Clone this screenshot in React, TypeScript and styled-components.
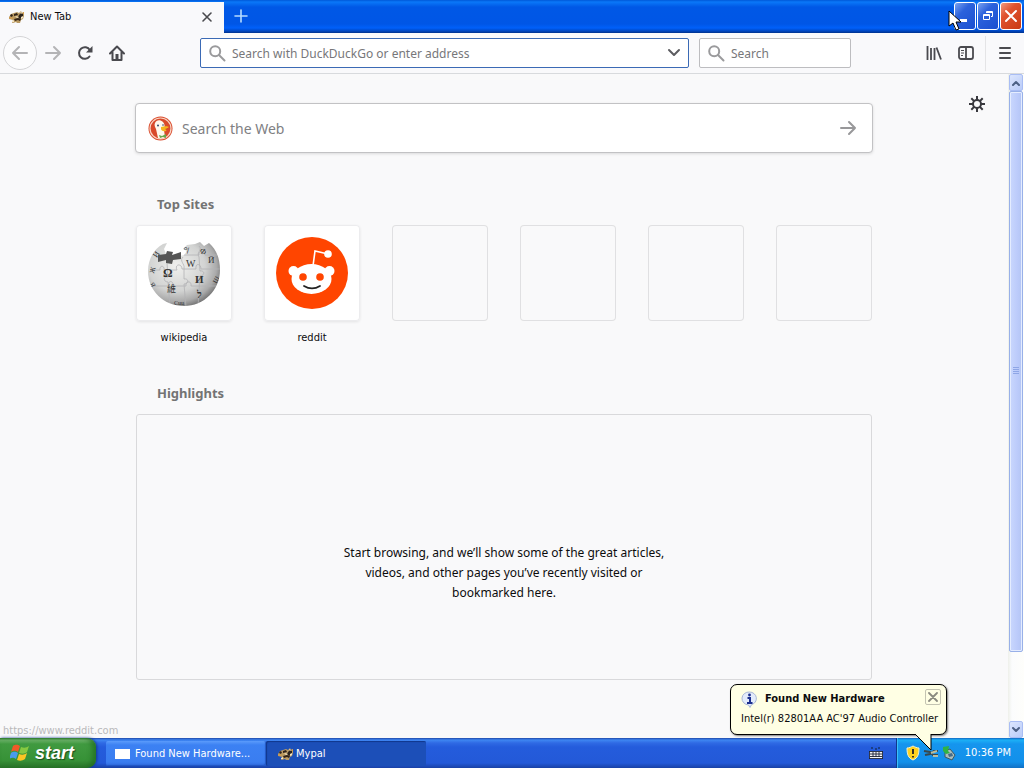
import React from "react";
import styled, { createGlobalStyle, css } from "styled-components";

const tahoma = `"DejaVu Sans Condensed", "DejaVu Sans", Tahoma, sans-serif`;
const segoe = `"Noto Sans", "Segoe UI", sans-serif`;

const GlobalStyle = createGlobalStyle`
  * { box-sizing: border-box; }
  body { margin: 0; background: #f9f9fa; color: #0c0c0d; font-family: ${segoe}; font-size: 12px; }
  button, input { font: inherit; color: inherit; }
  button { padding: 0; border: 0; background: none; }
  svg { display: block; flex: none; }
  h2, p, ul { margin: 0; padding: 0; }
`;

const Desktop = styled.div`
  position: relative;
  display: flex;
  flex-direction: column;
  height: 100vh;
  overflow: hidden;
`;

const TabStrip = styled.header`
  display: flex;
  flex: none;
  height: 33px;
  background: linear-gradient(#0058d8 0, #0a78f8 2px, #0058e6 7px, #0056e6 24px, #0060fa 28px, #0046c0 31px, #00318c 33px);
`;

const Tab = styled.div`
  display: flex;
  align-items: center;
  width: 224px;
  margin-top: 2px;
  padding: 0 8px 2px;
  gap: 4px;
  background: #f9f9fb;
  font: 11px/16px ${tahoma};
`;

const TabTitle = styled.span`
  flex: 1;
`;

const TabButton = styled.button`
  display: grid;
  place-items: center;
  width: 18px;
  height: 24px;
`;

const NewTab = styled.button`
  display: grid;
  place-items: center;
  width: 34px;
  padding-bottom: 2px;
`;

const WindowButtons = styled.div`
  display: flex;
  gap: 1px;
  margin: 2px 2px 3px auto;
`;

const WindowButton = styled.button<{ $close?: boolean }>`
  display: grid;
  place-items: center;
  width: 22px;
  border: 1px solid #fff;
  border-radius: 3px;
  background: ${(p) =>
    p.$close
      ? "linear-gradient(135deg, #f09a80, #e0532f 35%, #c93a12)"
      : "linear-gradient(135deg, #7aa2f0, #2c62dc 35%, #1b4fd0)"};
`;

const NavBar = styled.nav`
  display: flex;
  flex: none;
  align-items: center;
  height: 41px;
  padding: 0 3px;
  background: #f9f9fb;
  border-bottom: 1px solid #d8dadd;
`;

const ToolButton = styled.button<{ $round?: boolean; $dim?: boolean }>`
  display: grid;
  flex: none;
  place-items: center;
  width: 32px;
  height: 32px;
  color: ${(p) => (p.$dim ? "#b4b4b6" : "#4a4a4f")};
  ${(p) =>
    p.$round &&
    css`
      width: 34px;
      height: 34px;
      border: 1px solid #d4d4d6;
      border-radius: 50%;
      background: #fcfcfd;
    `}
`;

const GoButton = styled.button`
  display: grid;
  place-items: center;
  width: 18px;
  height: 24px;
  color: #98989a;
`;

const Spacer = styled.div`
  flex: 0 1 67px;
`;

const Field = styled.label<{ $main?: boolean }>`
  display: flex;
  align-items: center;
  flex: ${(p) => (p.$main ? "1 1 200px" : "0 0 152px")};
  min-width: 0;
  height: 30px;
  margin-right: ${(p) => (p.$main ? "10px" : "0")};
  padding: 0 7px 0 8px;
  gap: 6px;
  border: 1px solid ${(p) => (p.$main ? "#3b6ab5" : "#bdbdc0")};
  border-radius: 2px;
  background: #fff;
`;

const TextInput = styled.input`
  flex: 1;
  min-width: 0;
  height: 26px;
  padding: 0;
  border: 0;
  outline: 0;
  background: none;
  font: 12px/20px ${segoe};
  &::placeholder { color: #77777a; opacity: 1; }
`;

const WideInput = styled(TextInput)`
  font-size: 14px;
  &::placeholder { color: #808083; }
`;

const ToolDivider = styled.div`
  width: 1px;
  height: 35px;
  margin: 0 3px;
  background: #e4e4e6;
`;

const Viewport = styled.div`
  display: flex;
  flex: 1;
  min-height: 0;
`;

const Page = styled.main`
  position: relative;
  flex: 1;
  min-width: 0;
  overflow: hidden;
  padding: 29px 32px 0;
`;

const Settings = styled.button`
  position: absolute;
  top: 20px;
  right: 21px;
  width: 20px;
  height: 20px;
  display: grid;
  place-items: center;
`;

const Column = styled.div`
  max-width: 736px;
  margin: 0 auto;
`;

const WebSearch = styled.form`
  display: flex;
  align-items: center;
  height: 50px;
  margin: 0 -1px 40px;
  padding: 0 15px 0 12px;
  gap: 9px;
  border: 1px solid #c2c2c4;
  border-radius: 4px;
  background: #fff;
  box-shadow: 0 1px 3px #0000001f;
`;

const SectionTitle = styled.h2`
  margin: 0 21px 10px;
  color: #737373;
  font: bold 13px/22px ${segoe};
`;

const Sites = styled.ul`
  display: grid;
  grid-template-columns: repeat(6, 96px);
  justify-content: space-between;
  height: 157px;
  list-style: none;
`;

const SiteLink = styled.a`
  display: block;
  color: #0c0c0d;
  text-align: center;
  text-decoration: none;
  font: 11px/16px ${tahoma};
`;

const SiteTile = styled.span<{ $filled?: boolean }>`
  display: grid;
  place-items: center;
  height: 96px;
  margin-bottom: 9px;
  border-radius: 4px;
  background: ${(p) => (p.$filled ? "#fff" : "transparent")};
  box-shadow: ${(p) => (p.$filled ? "inset 0 0 0 1px #ececee, 0 1px 3px #00000017" : "inset 0 0 0 1px #e0e0e2")};
`;

const Highlights = styled.section`
  display: flex;
  justify-content: center;
  height: 266px;
  padding-top: 128px;
  border: 1px solid #d9d9db;
  border-radius: 3px;
`;

const EmptyText = styled.p`
  max-width: 346px;
  font: 12px/20px ${segoe};
  text-align: center;
`;

const ScrollBar = styled.div`
  display: flex;
  flex-direction: column;
  width: 16px;
  padding: 0 1px;
  background: linear-gradient(90deg, #eef0ea, #fbfcfd 4px, #fefefb);
`;

const ScrollButton = styled.button`
  display: grid;
  flex: none;
  place-items: center;
  height: 17px;
  border: 1px solid #a9bdf4;
  border-radius: 2px;
  background: linear-gradient(135deg, #dce6fe, #b9cbf8);
`;

const ScrollTrack = styled.div`
  flex: 1;
`;

const Thumb = styled.div`
  display: grid;
  place-items: center;
  height: 89%;
  border: 1px solid #98b0e8;
  border-radius: 2px;
  box-shadow: inset 0 0 0 1px #e4ecff;
  background: linear-gradient(90deg, #c9d7fd, #bccbfb 60%, #b3c5f4);
`;

const StatusText = styled.div`
  position: absolute;
  left: 3px;
  bottom: 29px;
  color: #b9b9bb;
  font: 11px/16px ${tahoma};
`;

const TaskBar = styled.footer`
  display: flex;
  flex: none;
  height: 30px;
  background: linear-gradient(#1f48a8 0, #3e86f2 2px, #2f6ae4 5px, #245cdc 9px, #2359d8 25px, #1941a5 30px);
  color: #fff;
  font: 11px/16px ${tahoma};
`;

const StartButton = styled.button`
  display: flex;
  align-items: center;
  width: 96px;
  margin-right: 10px;
  padding: 0 0 1px 10px;
  gap: 5px;
  border-radius: 0 9px 9px 0;
  background: linear-gradient(#2f7d2f 0, #6fb56c 2px, #409a40 6px, #379237 22px, #2a742a 30px);
  box-shadow: inset -4px 0 5px #1f6a1fb0, 1px 0 3px #123a8c;
  text-shadow: 1px 1px 1px #1b4b1b;
  font: italic bold 18px/24px "Liberation Sans", Arial, sans-serif;
`;

const Task = styled.button<{ $active?: boolean }>`
  display: flex;
  align-items: center;
  width: 160px;
  height: 25px;
  margin: 3px 0 0;
  padding: 0 9px;
  gap: ${(p) => (p.$active ? "1px" : "4px")};
  border-radius: 2px;
  background: ${(p) => (p.$active ? "#1c4fb8" : "linear-gradient(#5b9bfb, #3c81f3 4px, #3a7df0 21px, #3069dc)")};
  box-shadow: ${(p) => (p.$active ? "inset 1px 1px 1px #11378c" : "inset -1px -1px 1px #2257c4")};
  padding-left: ${(p) => (p.$active ? "11px" : "9px")};
`;

const TaskSpace = styled.div`
  flex: 1;
`;

const Keyboard = styled.button`
  display: grid;
  place-items: center;
  width: 40px;
  padding-top: 1px;
`;

const Tray = styled.div`
  display: flex;
  align-items: center;
  width: 128px;
  padding: 0 13px 0 8px;
  gap: 2px;
  border-left: 1px solid #10388c;
  background: linear-gradient(#1266c0 0, #1cb0f6 2px, #1595ee 6px, #1290ea 24px, #1170c4 30px);
  box-shadow: inset 1px 0 0 #3cc0fa;
`;

const Clock = styled.time`
  margin-left: auto;
  white-space: nowrap;
`;

const Balloon = styled.aside`
  position: absolute;
  right: 77px;
  bottom: 33px;
  width: 217px;
  height: 51px;
  padding: 5px 5px 0 10px;
  border: 1px solid #000;
  border-radius: 7px;
  background: #ffffe4;
  box-shadow: 1px 1px 2px #00000080;
  font: 11px/16px ${tahoma};
`;

const BalloonHead = styled.div`
  display: flex;
  align-items: center;
  gap: 7px;
  height: 18px;
  margin-bottom: 3px;
  font-weight: bold;
`;

const BalloonClose = styled.button`
  display: grid;
  place-items: center;
  width: 16px;
  height: 16px;
  margin: -4px 0 0 auto;
  border: 1px solid #c4c4b2;
  border-radius: 2px;
`;

const BalloonTail = styled.svg`
  position: absolute;
  right: 11px;
  top: 48px;
`;

const BalloonText = styled.p`
  white-space: nowrap;
`;

const Pointer = styled.svg`
  position: absolute;
  top: 10px;
  right: 60px;
`;

const line = (d: string, width = 2) => (
  <path d={d} fill="none" stroke="currentColor" strokeWidth={width} strokeLinecap="round" strokeLinejoin="round" />
);

function Mascot() {
  return (
    <svg width="18" height="16" viewBox="0 0 18 16" aria-hidden="true">
      <path d="M1 8 3 5 6 4 9 3l2 1 2-2 1 2 2-1v4l-1 3-2 1-1 3h-3l-1-1-3 1H4l1-3-4-1z" fill="#b99a63" />
      <path d="m2 6 2-1 1 2-2 1zM6 5l3-1 1 2-4 1zM6 10l4-1 3 1-1 2-2-1-3 1z" fill="#302319" />
      <path d="m11 6 2-2 2 1v3l-3 2-2-2z" fill="#2c241e" />
      <path d="m12 4 1-1 1 2zM13 8l2-1v2l-2 1zM7 7l4 1-2 1zM4 12l2-1v2H4z" fill="#f5e5c3" />
      <path d="m1 8 2 1 2-1-1 2-3-1zM14 4l2-1v2z" fill="#d99a45" />
    </svg>
  );
}

function Magnifier() {
  return (
    <svg width="17" height="17" viewBox="0 0 17 17" fill="none" stroke="#9a9a9c" strokeWidth="2" aria-hidden="true">
      <circle cx="6.2" cy="6.2" r="5" />
      <path d="m10 10 5.5 5.5" strokeLinecap="round" />
    </svg>
  );
}

function Duck() {
  return (
    <svg width="25" height="25" viewBox="0 0 25 25" aria-hidden="true">
      <circle cx="12.5" cy="12.5" r="12" fill="#d94a2b" />
      <circle cx="12.5" cy="12.5" r="10.5" fill="none" stroke="#f8d5c5" strokeWidth="1.2" />
      <path d="M7 7c1-3 5-4 8-1 2 2 2 5 1 8l1 7c-2 2-6 2-7 1L8 13C7 11 6 9 7 7z" fill="#fff8ec" />
      <path d="M13 11c3-1 7-1 8 0-1 1-4 2-4 2 1 1 2 1 1 2-3 1-5-1-5-2z" fill="#f5b51e" />
      <path d="m11 19 3 1 4-2v4l-3-1-3 1z" fill="#69a84b" />
      <circle cx="10" cy="9.5" r="1" fill="#30486a" />
      <circle cx="15" cy="9" r=".8" fill="#30486a" />
    </svg>
  );
}

const globeOutline =
  "M17 7 21 6l-3 6 2 5-6 3 8 2 16-4 3-4-4-2 4-4 8-1 5-2 4 4 5-3c7 6 11 15 11 27 0 20-16 36-36 36S2 54 2 34C2 22 8 12 17 7z";

function Globe() {
  return (
    <svg width="76" height="72" viewBox="0 0 76 72" aria-hidden="true">
      <defs>
        <radialGradient id="globe" cx="40%" cy="38%" r="65%">
          <stop offset="0" stopColor="#f0f0ee" />
          <stop offset=".6" stopColor="#d2d3d2" />
          <stop offset=".85" stopColor="#aaa" />
          <stop offset="1" stopColor="#747474" />
        </radialGradient>
        <clipPath id="globe-edge"><path d={globeOutline} /></clipPath>
      </defs>
      <path d={globeOutline} fill="url(#globe)" />
      <g clipPath="url(#globe-edge)">
        <path
          fill="none"
          stroke="#b2b2b5"
          strokeWidth=".8"
          d="M4 33h10c-1-5 5-5 4 0h13c-3-6 5-7 5-1h14c-1-6 5-6 5 0h19M5 49h18c-2-6 5-6 4 0h13c-1-5 6-6 5 0h25M21 26l1 14c-5-1-5 5 0 5l2 24M37 20c-4 4 2 7 1 11v11c5-1 5 5 0 5l2 23M53 9c4 4-3 6 0 11l1 14c5-1 5 5 0 5l-2 30M38 18h15c-1-5 5-5 6 0h12"
        />
        <g fill="#333" fontFamily="Liberation Serif, serif">
          <text x="17" y="40" fontSize="12" fontWeight="bold">Ω</text>
          <text x="40" y="30" fontSize="10">W</text>
          <text x="49" y="46" fontSize="11" fontWeight="bold">И</text>
          <text x="21" y="55" fontSize="9" fontFamily="Noto Sans CJK TC, sans-serif">維</text>
          <text x="37" y="15" fontSize="7" transform="rotate(15 38 12)" fontFamily="Noto Sans CJK KR, sans-serif">의</text>
          <text x="55" y="16" fontSize="8" transform="rotate(35 56 12)">Ф</text>
          <text x="62" y="26" fontSize="9">Й</text>
          <text x="51" y="61" fontSize="10" fontWeight="bold">ל</text>
          <text x="7" y="20" fontSize="8" transform="rotate(-55 10 17)">И</text>
          <text x="3" y="36" fontSize="7" transform="rotate(-75 6 33)">Ж</text>
          <text x="5" y="50" fontSize="7" transform="rotate(65 7 47)">Я</text>
          <text x="66" y="45" fontSize="7" transform="rotate(-60 70 42)">Ш</text>
          <text x="28" y="68" fontSize="6">Cuu</text>
        </g>
      </g>
      <path d="m12 18 8-1 1-3 6 1-1 3 9-3v7l-8 1-1 4-6-1v-3l-8 2z" fill="#555" />
    </svg>
  );
}

function RedditFace() {
  return (
    <svg width="72" height="72" viewBox="0 0 72 72" aria-hidden="true">
      <circle cx="36" cy="36" r="36" fill="#ff4500" />
      <path d="m37 29 2-15 13 3" fill="none" stroke="#fff" strokeWidth="1.6" />
      <circle cx="52" cy="17" r="3.8" fill="#fff" />
      <circle cx="17.5" cy="34" r="5" fill="#fff" />
      <circle cx="53.500" cy="34" r="5" fill="#fff" />
      <ellipse cx="35.5" cy="42" rx="20" ry="15" fill="#fff" />
      <circle cx="27" cy="40" r="3.8" fill="#ff4500" />
      <circle cx="44" cy="40" r="3.8" fill="#ff4500" />
      <path d="M28 49c5 3 11 3 16 0" fill="none" stroke="#222" strokeWidth="1.8" strokeLinecap="round" />
    </svg>
  );
}

function Flag() {
  return (
    <svg width="20" height="19" viewBox="0 0 20 19" aria-hidden="true">
      <path d="M3 3c3-2 5-1 7 0L8 9C6 8 4 7 1 9z" fill="#f05a28" />
      <path d="M11 4c3 1 5 1 8-1l-2 6c-2 2-5 2-8 1z" fill="#86c841" />
      <path d="M1 10c3-2 5-1 7 0l-2 6c-2-1-4-2-7 0z" fill="#4a9bec" />
      <path d="M9 11c3 1 5 1 8-1l-2 6c-3 2-5 2-8 1z" fill="#fcc524" />
    </svg>
  );
}

const Arrow = ({ back }: { back?: boolean }) => (
  <svg width="18" height="18" viewBox="0 0 18 18" aria-hidden="true">
    {line(back ? "M16 9H2m6-6L2 9l6 6" : "M2 9h14m-6-6 6 6-6 6")}
  </svg>
);

const Chevron = ({ up }: { up?: boolean }) => (
  <svg width="8" height="6" viewBox="0 0 8 6" color="#4d6185" aria-hidden="true">
    {line(up ? "m1 5 3-3 3 3" : "m1 1 3 3 3-3")}
  </svg>
);

const sites = [
  { name: "wikipedia", url: "https://www.wikipedia.org", art: <Globe /> },
  { name: "reddit", url: "https://www.reddit.com", art: <RedditFace /> },
];

export default function App() {
  return (
    <Desktop>
      <GlobalStyle />
      <TabStrip>
        <Tab>
          <Mascot />
          <TabTitle>New Tab</TabTitle>
          <TabButton aria-label="Close tab">
            <svg width="12" height="12" viewBox="0 0 12 12" color="#4a4a4e">{line("m2 2 8 8m0-8-8 8", 1.6)}</svg>
          </TabButton>
        </Tab>
        <NewTab aria-label="New tab">
          <svg width="16" height="16" viewBox="0 0 16 16" color="#b5dcff">{line("M8 2v12M2 8h12", 1.6)}</svg>
        </NewTab>
        <WindowButtons>
          <WindowButton aria-label="Minimize">
            <svg width="16" height="16"><path d="M3 11h7v3H3z" fill="#fff" /></svg>
          </WindowButton>
          <WindowButton aria-label="Restore">
            <svg width="14" height="14" fill="none" stroke="#fff">
              <path d="M5.500 4V2.500h6v5H10M5 3.500h7M2.500 5.500h6v5h-6zM2 6.500h7" />
            </svg>
          </WindowButton>
          <WindowButton $close aria-label="Close">
            <svg width="14" height="14" viewBox="0 0 14 14" color="#fff">{line("m2 2 10 10m0-10L2 12")}</svg>
          </WindowButton>
        </WindowButtons>
      </TabStrip>

      <NavBar>
        <ToolButton $round $dim aria-label="Back"><Arrow back /></ToolButton>
        <ToolButton $dim aria-label="Forward"><Arrow /></ToolButton>
        <ToolButton aria-label="Reload">
          <svg width="16" height="16" viewBox="0 0 16 16">
            {line("M12.5 11.5a5.8 5.8 0 1 1 .3-6.500")}
            <path d="M15.5 1v6.500H9z" fill="currentColor" />
          </svg>
        </ToolButton>
        <ToolButton aria-label="Home">
          <svg width="16" height="16" viewBox="0 0 16 16">
            {line("M1 8.500 8 1.500l7 7M3.500 7.500V15h9V7.500")}
            <path d="M6.500 9h3v6h-3z" fill="currentColor" />
          </svg>
        </ToolButton>
        <Spacer />
        <Field $main>
          <Magnifier />
          <TextInput aria-label="Address" placeholder="Search with DuckDuckGo or enter address" />
          <svg width="14" height="10" viewBox="0 0 14 10" color="#5c5c60">{line("m2 2 5 5 5-5")}</svg>
        </Field>
        <Field>
          <Magnifier />
          <TextInput aria-label="Search" placeholder="Search" />
        </Field>
        <Spacer />
        <ToolButton aria-label="Library">
          <svg width="16" height="16" viewBox="0 0 16 16" fill="none" stroke="currentColor" strokeWidth="1.8">
            <path d="M1.500 1v14M5 3v12M8.500 3v12M10.500 2.500l4.500 12" />
          </svg>
        </ToolButton>
        <ToolButton aria-label="Sidebars">
          <svg width="16" height="14" viewBox="0 0 16 14" fill="none" stroke="currentColor" strokeWidth="1.800">
            <rect x="1" y="1" width="14" height="12" rx="2" />
            <path d="M8 1v12" /><path d="M3 4.500h3M3 7h3M3 9.500h2" strokeWidth="1" />
          </svg>
        </ToolButton>
        <ToolDivider />
        <ToolButton aria-label="Menu">
          <svg width="14" height="14" viewBox="0 0 14 14">{line("M2 2h10M2 7h10M2 12h10")}</svg>
        </ToolButton>
      </NavBar>

      <Viewport>
        <Page>
          <Settings aria-label="Customize this page">
            <svg width="16" height="16" viewBox="0 0 16 16" fill="none" stroke="#38383d" strokeWidth="2">
              <circle cx="8" cy="8" r="4" />
              <path d="M8 0v4M8 12v4M0 8h4M12 8h4M2.300 2.300l2.800 2.800M10.900 10.900l2.800 2.800M2.300 13.700l2.800-2.800M10.900 5.100l2.800-2.800" />
            </svg>
          </Settings>
          <Column>
            <WebSearch>
              <Duck />
              <WideInput aria-label="Search the Web" placeholder="Search the Web" />
              <GoButton aria-label="Go" type="button"><Arrow /></GoButton>
            </WebSearch>
            <SectionTitle>Top Sites</SectionTitle>
            <Sites>
              {sites.map((s) => (
                <li key={s.name}>
                  <SiteLink href={s.url}><SiteTile $filled>{s.art}</SiteTile>{s.name}</SiteLink>
                </li>
              ))}
              {[0, 1, 2, 3].map((n) => <li key={n}><SiteTile /></li>)}
            </Sites>
            <SectionTitle>Highlights</SectionTitle>
            <Highlights>
              <EmptyText>
                Start browsing, and we’ll show some of the great articles, videos, and other pages you’ve recently visited or bookmarked here.
              </EmptyText>
            </Highlights>
          </Column>
        </Page>
        <ScrollBar>
          <ScrollButton aria-label="Scroll up"><Chevron up /></ScrollButton>
          <ScrollTrack>
            <Thumb><svg width="7" height="8" stroke="#8ea6e6"><path d="M0 .5h6M0 2.500h6M0 4.500h6M0 6.500h6" /></svg></Thumb>
          </ScrollTrack>
          <ScrollButton aria-label="Scroll down"><Chevron /></ScrollButton>
        </ScrollBar>
      </Viewport>

      <TaskBar>
        <StartButton><Flag />start</StartButton>
        <Task>
          <svg width="16" height="12"><path d="M0 1h15v10H0z" fill="#fff" /></svg>
          Found New Hardware...
        </Task>
        <Task $active><Mascot />Mypal</Task>
        <TaskSpace />
        <Keyboard aria-label="Keyboard layout">
          <svg width="14" height="13" viewBox="0 0 14 13">
            <path d="M3 2V0M7 3V1M10 2V0" stroke="#123" /><path d="M0 4h14v8H0z" fill="#f4f4f4" />
            <path d="M0 4.500h14M0 11.500h14M1 7h12M1 9.500h12M.5 4v8M13.500 4v8M4 5v5M7 5v5M10 5v5" stroke="#1b2238" strokeWidth=".9" />
          </svg>
        </Keyboard>
        <Tray>
          <svg width="16" height="16" viewBox="0 0 16 16">
            <path d="M8 1c2 1 4 2 6 2 0 6-1 10-6 12C3 13 2 9 2 3c2 0 4-1 6-2z" fill="#ffd21e" stroke="#f2f0d0" />
            <path d="M8 4v5M8 11v1.500" stroke="#222" strokeWidth="1.8" />
          </svg>
          <svg width="16" height="16" viewBox="0 0 16 16">
            <path d="m1 6 6 1 3 3h5M2 10l5-1 4-3h4" fill="none" stroke="#38484a" strokeWidth="2" />
            <path d="m8 8 6-2M10 11h5" stroke="#b8bd9e" strokeWidth="2" />
          </svg>
          <svg width="16" height="16" viewBox="0 0 16 16">
            <path d="m4 6 5-2 5 6-3 5-7-3z" fill="#a9bdbb" stroke="#3e5862" />
            <path d="m2 2 6-1-1 5 2 2-4 1-3-3z" fill="#2eb344" />
            <path d="m7 9 4-1 1 3-4 1z" fill="#456b8a" />
          </svg>
          <Clock>10:36 PM</Clock>
        </Tray>
      </TaskBar>

      <StatusText>https://www.reddit.com</StatusText>

      <Balloon>
        <BalloonHead>
          <svg width="17" height="17" viewBox="0 0 17 17">
            <path d="M8.500 1a7 6.500 0 0 1 2 12.700l-1.500 2.800-1.500-2.500A7 6.500 0 0 1 8.500 1z" fill="#e3ebfb" stroke="#a8b6d6" />
            <circle cx="8.500" cy="4" r="1.4" fill="#1c2f8e" />
            <path d="M6.500 7h2.500v5m-3 0h5.500" fill="none" stroke="#1c2f8e" strokeWidth="2" />
          </svg>
          Found New Hardware
          <BalloonClose aria-label="Dismiss">
            <svg width="10" height="10" viewBox="0 0 10 10" color="#8a8a80">{line("m1 1 8 8m0-8L1 9", 1.8)}</svg>
          </BalloonClose>
        </BalloonHead>
        <BalloonText>Intel(r) 82801AA AC'97 Audio Controller</BalloonText>
        <BalloonTail width="22" height="19" viewBox="0 0 22 19">
          <path d="M2 0v1l16 16V0z" fill="#ffffe4" />
          <path d="m2 1 16 16V1" fill="none" stroke="#000" />
        </BalloonTail>
      </Balloon>

      <Pointer width="16" height="22" viewBox="0 0 16 22" aria-hidden="true">
        <path d="M1 1v15l4-3 3 7 3-1-3-7h5z" fill="#fff" stroke="#000" />
      </Pointer>
    </Desktop>
  );
}
